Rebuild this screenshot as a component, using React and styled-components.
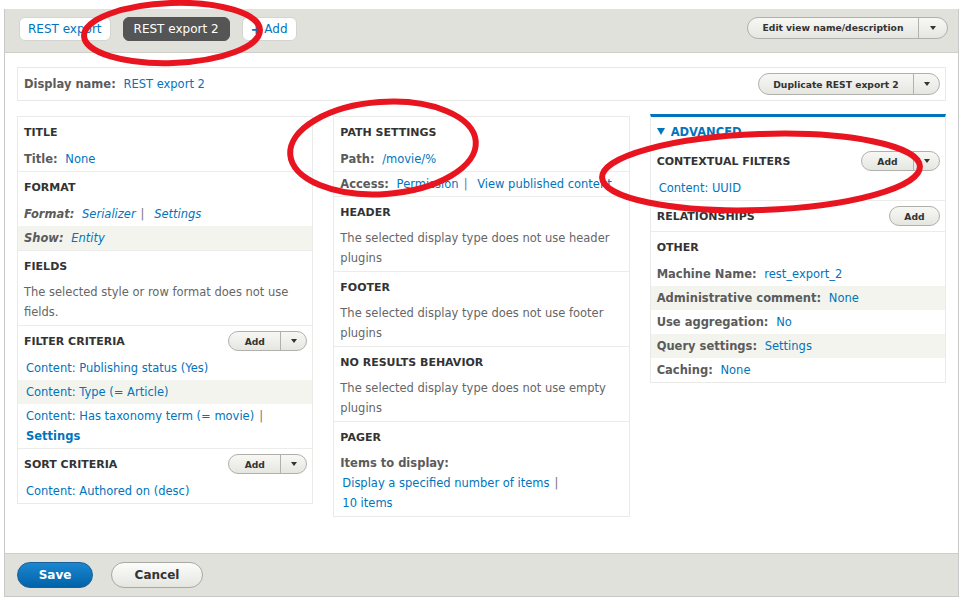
import styled, { createGlobalStyle, css } from "styled-components";

const GlobalStyle = createGlobalStyle`
  body {
    margin: 0;
    background: #fff;
    font-family: "DejaVu Sans", sans-serif;
  }
`

const Page = styled.div`
  position: relative;
  width: 961px;
  height: 601px;
  padding: 9px 2px 0 4px;
  box-sizing: border-box;
  overflow: hidden;
`

const Frame = styled.div`
  border-left: 1px solid #c9c9c9;
  border-right: 1px solid #c9c9c9;
`

const Bar = styled.div`
  height: 44px;
  box-sizing: border-box;
  background: #e1e1db;
  display: flex;
  align-items: flex-start;
  justify-content: space-between;
  padding: 8px 10px 0 14px;
  border-bottom: 1px solid #cfcfca;
`

const Tabs = styled.div`
  display: flex;
  gap: 12px;
`

const Tab = styled.span`
  height: 24px;
  box-sizing: border-box;
  display: inline-flex;
  align-items: center;
  padding: 0 8px;
  border: 1px solid #d4d4d0;
  border-radius: 6px;
  background: #fff;
  color: #0074bd;
  font-size: 12px;

  ${p => p.$active && css`
    background: #555;
    border-color: #555;
    color: #fff;
    padding: 0 10px;
  `}
`

const Plus = styled.b`
  font-size: 14px;
  margin-right: 2px;
`

const Body = styled.div`
  height: 500px;
  box-sizing: border-box;
  padding: 14px 12px 0 12px;
  background: #fff;
`

const DisplayBox = styled.div`
  height: 34px;
  box-sizing: border-box;
  border: 1px solid #e8e8e6;
  display: flex;
  align-items: center;
  justify-content: space-between;
  padding: 0 5px 0 6px;
  margin-bottom: 15px;
  font-size: 11.5px;
`

const Columns = styled.div`
  display: grid;
  grid-template-columns: 1fr 1fr 1fr;
  gap: 20px;
  align-items: start;
`

const Column = styled.div`
  border: 1px solid #eaeae8;
  ${p => p.$advanced && css`
    border-top: 3px solid #0074bd;
    margin-top: -2px;
  `}
`

const Section = styled.div`
  & + & {
    border-top: 1px solid #ececea;
  }
`

const Heading = styled.div`
  height: 30px;
  display: flex;
  align-items: center;
  justify-content: space-between;
  padding: 0 5px 0 6px;
  font-size: 11px;
  font-weight: bold;
  color: #333;
`

const Toggle = styled.div`
  height: 29px;
  display: flex;
  align-items: center;
  padding: 0 6px;
  font-size: 11.5px;
  font-weight: bold;
  color: #0074bd;

  &::before {
    content: "";
    border-left: 4.5px solid transparent;
    border-right: 4.5px solid transparent;
    border-top: 7px solid #0074bd;
    margin-right: 6px;
  }
`

const Row = styled.div`
  padding: ${p => p.$indent ? "2px 6px 2px 8px" : "2px 6px"};
  line-height: 20px;
  font-size: 11.5px;
  color: #666;
  background: ${p => p.$stripe ? "#f3f4ee" : "transparent"};
  font-style: ${p => p.$italic ? "italic" : "normal"};
  border-top: ${p => p.$ruled ? "1px solid #ececea" : "none"};
  white-space: nowrap;
  overflow: hidden;
`

const Text = styled.div`
  padding: 1px 6px 3px;
  line-height: 20px;
  font-size: 11.5px;
  color: #666;
`

const Line = styled.div`
  padding-left: ${p => p.$indent ? 2 : 0}px;
`

const Label = styled.span`
  font-weight: bold;
  color: #5b5b5b;
  margin-right: 4px;
`

const Link = styled.a`
  color: #0074bd;
  text-decoration: none;
  font-weight: ${p => p.$bold ? "bold" : "normal"};
`

const Pipe = styled.span`
  color: #777;
  margin: 0 6px 0 5px;
`

const Drop = styled.span`
  display: inline-flex;
  height: ${p => p.$tall ? 22 : 20}px;
  box-sizing: border-box;
  border: 1px solid #b0b0ac;
  border-radius: 11px;
  background: linear-gradient(#f7f7f4, #e6e6e1);
  font-size: 9.2px;
  font-weight: bold;
  color: #333;
  overflow: hidden;
`

const DropMain = styled.span`
  width: ${p => p.$w}px;
  display: flex;
  align-items: center;
  justify-content: center;
`

const DropArrow = styled.span`
  width: ${p => p.$w || 25}px;
  border-left: 1px solid #b0b0ac;
  display: flex;
  align-items: center;
  justify-content: center;

  &::after {
    content: "";
    border-left: 3.5px solid transparent;
    border-right: 3.5px solid transparent;
    border-top: 4px solid #333;
  }
`

const EditSlot = styled.div`
  margin-top: -1px;
`

const Footer = styled.div`
  height: 44px;
  box-sizing: border-box;
  background: #e1e1db;
  border-top: 1px solid #cfcfca;
  border-bottom: 1px solid #c9c9c9;
  display: flex;
  align-items: center;
  gap: 18px;
  padding: 0 12px;
`

const Button = styled.button`
  height: 26px;
  width: ${p => p.$w}px;
  border-radius: 13px;
  font-family: "DejaVu Sans", sans-serif;
  font-size: 12px;
  font-weight: bold;
  border: 1px solid #a8a8a4;
  background: linear-gradient(#fcfcfa, #e5e5e0);
  color: #333;

  ${p => p.$primary && css`
    background: linear-gradient(#1c87cf, #0063a9);
    border-color: #1a5f95;
    color: #fff;
  `}
`

const Marks = styled.svg`
  position: absolute;
  top: 0;
  left: 0;
  pointer-events: none;
`

function Dropbutton({ label, main, arrow, tall, single }) {
  return (
    <Drop $tall={tall}>
      <DropMain $w={main}>{label}</DropMain>
      {!single && <DropArrow $w={arrow} />}
    </Drop>
  )
}

function App() {
  return (
    <Page>
      <GlobalStyle />
      <Frame>
        <Bar>
          <Tabs>
            <Tab>REST export</Tab>
            <Tab $active>REST export 2</Tab>
            <Tab><Plus>+</Plus>Add</Tab>
          </Tabs>
          <EditSlot>
            <Dropbutton tall label="Edit view name/description" main={170} arrow={28} />
          </EditSlot>
        </Bar>

        <Body>
          <DisplayBox>
            <span><Label>Display name:</Label> <Link>REST export 2</Link></span>
            <Dropbutton tall label="Duplicate REST export 2" main={154} arrow={25} />
          </DisplayBox>

          <Columns>
            <Column>
              <Section>
                <Heading>TITLE</Heading>
                <Row><Label>Title:</Label> <Link>None</Link></Row>
              </Section>
              <Section>
                <Heading>FORMAT</Heading>
                <Row $italic><Label>Format:</Label> <Link>Serializer</Link><Pipe>|</Pipe> <Link>Settings</Link></Row>
                <Row $italic $stripe><Label>Show:</Label> <Link>Entity</Link></Row>
              </Section>
              <Section>
                <Heading>FIELDS</Heading>
                <Text>The selected style or row format does not use fields.</Text>
              </Section>
              <Section>
                <Heading>FILTER CRITERIA <Dropbutton label="Add" main={51} arrow={25} /></Heading>
                <Row $indent><Link>Content: Publishing status (Yes)</Link></Row>
                <Row $indent $stripe><Link>Content: Type (= Article)</Link></Row>
                <Row $indent>
                  <Line><Link>Content: Has taxonomy term (= movie)</Link><Pipe>|</Pipe></Line>
                  <Line><Link $bold>Settings</Link></Line>
                </Row>
              </Section>
              <Section>
                <Heading>SORT CRITERIA <Dropbutton label="Add" main={51} arrow={25} /></Heading>
                <Row $indent><Link>Content: Authored on (desc)</Link></Row>
              </Section>
            </Column>

            <Column>
              <Section>
                <Heading>PATH SETTINGS</Heading>
                <Row><Label>Path:</Label>  <Link>/movie/%</Link></Row>
                <Row $ruled><Label>Access:</Label> <Link>Permission</Link><Pipe>|</Pipe> <Link>View published content</Link></Row>
              </Section>
              <Section>
                <Heading>HEADER</Heading>
                <Text>The selected display type does not use header plugins</Text>
              </Section>
              <Section>
                <Heading>FOOTER</Heading>
                <Text>The selected display type does not use footer plugins</Text>
              </Section>
              <Section>
                <Heading>NO RESULTS BEHAVIOR</Heading>
                <Text>The selected display type does not use empty plugins</Text>
              </Section>
              <Section>
                <Heading>PAGER</Heading>
                <Text>
                  <Line><Label>Items to display:</Label></Line>
                  <Line $indent><Link>Display a specified number of items</Link><Pipe>|</Pipe></Line>
                  <Line $indent><Link>10 items</Link></Line>
                </Text>
              </Section>
            </Column>

            <Column $advanced>
              <Section>
                <Toggle>ADVANCED</Toggle>
                <Heading>CONTEXTUAL FILTERS <Dropbutton label="Add" main={51} arrow={25} /></Heading>
                <Row $indent><Link>Content: UUID</Link></Row>
              </Section>
              <Section>
                <Heading>RELATIONSHIPS <Dropbutton single label="Add" main={49} /></Heading>
              </Section>
              <Section>
                <Heading>OTHER</Heading>
                <Row><Label>Machine Name:</Label> <Link>rest_export_2</Link></Row>
                <Row $stripe><Label>Administrative comment:</Label> <Link>None</Link></Row>
                <Row><Label>Use aggregation:</Label> <Link>No</Link></Row>
                <Row $stripe><Label>Query settings:</Label> <Link>Settings</Link></Row>
                <Row><Label>Caching:</Label> <Link>None</Link></Row>
              </Section>
            </Column>
          </Columns>
        </Body>

        <Footer>
          <Button $primary $w={76}>Save</Button>
          <Button $w={92}>Cancel</Button>
        </Footer>
      </Frame>

      <Marks width="961" height="601" viewBox="0 0 961 601">
        <g fill="none" stroke="#e8141f" strokeWidth="6">
          <ellipse cx="172" cy="33" rx="88" ry="30" transform="rotate(-2 172 33)" />
          <ellipse cx="383" cy="148" rx="93" ry="46" transform="rotate(-4 383 148)" />
          <ellipse cx="761" cy="172" rx="159" ry="38" transform="rotate(-2 761 172)" />
        </g>
      </Marks>
    </Page>
  );
}

export default App;
